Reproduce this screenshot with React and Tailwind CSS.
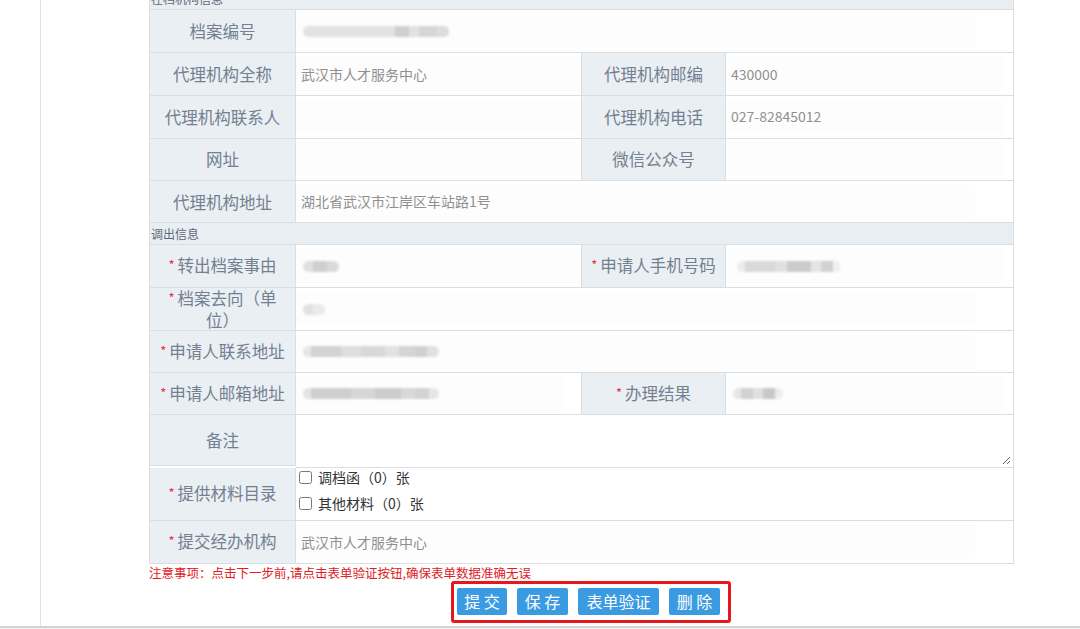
import React from "react";

const FONT = "font-['Noto_Sans_CJK_SC','Noto_Sans',sans-serif]";

function Star() {
  return <span className="text-[#e8323c] text-[13px] mr-[3px] relative -top-[2px]">*</span>;
}

function Label({ children, req, h, className = "" }) {
  return (
    <div
      className={`bg-[#eaeff4] border-r border-b border-[#d9dee3] flex items-center justify-center text-center px-[5px] text-[16.5px] leading-[20px] text-[#728090] ${className}`}
      style={h ? { height: h } : undefined}
    >
      <div>
        {req && <Star />}
        {children}
      </div>
    </div>
  );
}

function Value({ children, span = 1, boxRight = 0, className = "" }) {
  const spanCls = span === 3 ? "col-span-3" : "";
  return (
    <div className={`bg-white border-r border-b border-[#d9dee3] flex items-center ${spanCls} ${className}`}>
      <div
        className="flex items-center h-[34px] bg-[#fdfdfd] pl-[5px] text-[14px] text-[#909090] flex-1"
        style={{ marginRight: boxRight }}
      >
        {children}
      </div>
    </div>
  );
}

function Blur({ segs, ml = 2 }) {
  return (
    <div className="flex h-[11px] rounded-full overflow-hidden blur-[1.2px]" style={{ marginLeft: ml }}>
      {segs.map(([w, c], i) => (
        <div key={i} style={{ width: w, background: c }} />
      ))}
    </div>
  );
}

function Section({ children }) {
  return (
    <div className="col-span-4 h-[22px] bg-[#e9eef3] border-r border-b border-[#d9dee3] flex items-center text-[12px] text-[#5e6a77] pl-[1px]">
      {children}
    </div>
  );
}

export default function App() {
  return (
    <div className={`w-[1080px] h-[629px] overflow-hidden bg-white flex flex-col ${FONT}`}>
      <div className="flex-1 flex min-h-0">
        <div className="w-[40px] shrink-0" />
        <div className="flex-1 border-l border-[#e2e2e2] pl-[108px]">
          <div className="-mt-[12px] w-[865px] grid grid-cols-[146px_286px_144px_288px] border-l border-[#d9dee3]">
            <Section>在档机构信息</Section>

            <Label h={43}>档案编号</Label>
            <Value span={3} boxRight={38}>
              <Blur
                segs={[
                  [92, "#e3e3e3"],
                  [14, "#d0d0d0"],
                  [10, "#e2e2e2"],
                  [18, "#d6d6d6"],
                  [12, "#dcdcdc"],
                ]}
              />
            </Value>

            <Label h={43}>代理机构全称</Label>
            <Value>武汉市人才服务中心</Value>
            <Label>代理机构邮编</Label>
            <Value boxRight={10}>430000</Value>

            <Label h={42.5}>代理机构联系人</Label>
            <Value> </Value>
            <Label>代理机构电话</Label>
            <Value boxRight={10}>027-82845012</Value>

            <Label h={42.5}>网址</Label>
            <Value> </Value>
            <Label>微信公众号</Label>
            <Value boxRight={10}> </Value>

            <Label h={42}>代理机构地址</Label>
            <Value span={3} boxRight={38}>湖北省武汉市江岸区车站路1号</Value>

            <Section>调出信息</Section>

            <Label h={43} req>转出档案事由</Label>
            <Value>
              <Blur segs={[[10, "#e0e0e0"], [14, "#cfcfcf"], [12, "#dadada"]]} />
            </Value>
            <Label req>申请人手机号码</Label>
            <Value boxRight={10}>
              <Blur
                segs={[
                  [8, "#ececec"],
                  [30, "#d9d9d9"],
                  [12, "#e0e0e0"],
                  [24, "#cbcbcb"],
                  [10, "#e5e5e5"],
                  [12, "#d2d2d2"],
                  [8, "#f0f0f0"],
                ]}
                ml={6}
              />
            </Value>

            <Label h={43} req>
              档案去向（单
              <br />
              位）
            </Label>
            <Value span={3} boxRight={38}>
              <Blur segs={[[10, "#e2e2e2"], [12, "#ebebeb"]]} />
            </Value>

            <Label h={42} req>申请人联系地址</Label>
            <Value span={3} boxRight={38}>
              <Blur
                segs={[
                  [8, "#e6e6e6"],
                  [30, "#d3d3d3"],
                  [20, "#dedede"],
                  [24, "#d8d8d8"],
                  [14, "#e2e2e2"],
                  [16, "#d5d5d5"],
                  [12, "#d0d0d0"],
                  [12, "#e0e0e0"],
                ]}
              />
            </Value>

            <Label h={42} req>申请人邮箱地址</Label>
            <Value boxRight={18}>
              <Blur
                segs={[
                  [8, "#e4e4e4"],
                  [40, "#cfcfcf"],
                  [24, "#d6d6d6"],
                  [26, "#cccccc"],
                  [14, "#d8d8d8"],
                  [14, "#d3d3d3"],
                  [10, "#e6e6e6"],
                ]}
              />
            </Value>
            <Label req>办理结果</Label>
            <Value boxRight={10}>
              <Blur segs={[[8, "#e6e6e6"], [12, "#d2d2d2"], [10, "#e0e0e0"], [12, "#c8c8c8"], [8, "#ececec"]]} ml={2} />
            </Value>

            <Label h={51}>备注</Label>
            <div className="col-span-3 bg-white border-r border-b border-[#d9dee3] p-[2px] flex">
              <textarea className="flex-1 border-0 outline-none resize bg-white" />
            </div>

            <Label h={53} req>提供材料目录</Label>
            <div className="col-span-3 bg-white border-r border-b border-[#d9dee3] flex flex-col gap-[4px] pl-[3px] text-[14px] text-[#333]">
              <label className="flex items-center h-[22px] -mt-[2px]">
                <input type="checkbox" className="m-0 w-[13px] h-[13px]" />
                <span className="ml-[6px]">调档函（0）张</span>
              </label>
              <label className="flex items-center h-[22px]">
                <input type="checkbox" className="m-0 w-[13px] h-[13px]" />
                <span className="ml-[6px]">其他材料（0）张</span>
              </label>
            </div>

            <Label h={43} req>提交经办机构</Label>
            <Value span={3} boxRight={38}>武汉市人才服务中心</Value>
          </div>

          <div className="mt-[1px] text-[12.5px] leading-[16px] text-[#e0201e]">
            注意事项：点击下一步前,请点击表单验证按钮,确保表单数据准确无误
          </div>

          <div className="ml-[302px] w-fit border-[3px] border-[#e8171b] rounded-[3px] pt-[4px] pb-[5px] pl-[3px] pr-[8px] flex gap-[10px]">
            <button className="w-[50px] h-[27px] bg-[#3b9be2] rounded-[2px] text-white text-[16px] leading-[27px]">提 交</button>
            <button className="w-[51px] h-[27px] bg-[#3b9be2] rounded-[2px] text-white text-[16px] leading-[27px]">保 存</button>
            <button className="w-[81px] h-[27px] bg-[#3b9be2] rounded-[2px] text-white text-[16px] leading-[27px]">表单验证</button>
            <button className="w-[51px] h-[27px] bg-[#3b9be2] rounded-[2px] text-white text-[16px] leading-[27px]">删 除</button>
          </div>
        </div>
      </div>
      <div className="h-[2px] bg-[#d3d3d3] shrink-0" />
      <div className="h-[1px] bg-[#f2f2f2] shrink-0" />
    </div>
  );
}
